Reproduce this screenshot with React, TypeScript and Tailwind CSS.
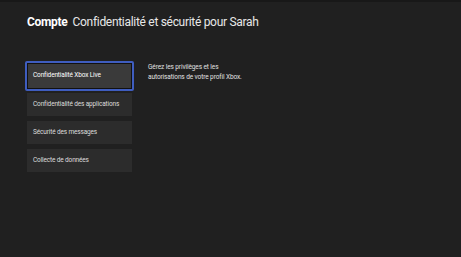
import React from "react";

const items = [
  "Confidentialité des applications",
  "Sécurité des messages",
  "Collecte de données",
];

export default function App() {
  return (
    <div
      className="w-[461px] h-[257px] bg-[#202020] text-[#e6e6e6] overflow-hidden border-t-2 border-[#181818]"
      style={{ fontFamily: "Roboto, 'Noto Sans', sans-serif" }}
    >
      <div className="pl-[27px] pt-[12px] flex items-baseline gap-[5px] text-[12px] leading-[16px] tracking-[-0.3px]">
        <span className="font-bold text-white">Compte</span>
        <span className="text-[#e8e8e8]">Confidentialité et sécurité pour Sarah</span>
      </div>
      <div className="flex mt-[31px] pl-[25px]">
        <div className="flex flex-col w-[109px]">
          <div className="h-[30px] rounded-[2px] border-[2px] border-[#3f5dbf] bg-[#3a3a3a] flex items-center pl-[6px] text-[6.5px] tracking-[-0.15px] text-white shadow-[inset_0_0_0_1px_#111] whitespace-nowrap">
            Confidentialité Xbox Live
          </div>
          <div className="flex flex-col gap-[5px] mt-[2px] px-[2px]">
            {items.map((t) => (
              <div
                key={t}
                className="h-[23px] bg-[#2c2c2c] flex items-center pl-[6px] text-[6.5px] tracking-[-0.15px] text-[#dcdcdc] whitespace-nowrap"
              >
                {t}
              </div>
            ))}
          </div>
        </div>
        <div className="ml-[14px] pt-[1px] text-[6.5px] leading-[10px] tracking-[-0.1px] text-[#e0e0e0]">
          <div>Gérez les privilèges et les</div>
          <div>autorisations de votre profil Xbox.</div>
        </div>
      </div>
    </div>
  );
}
